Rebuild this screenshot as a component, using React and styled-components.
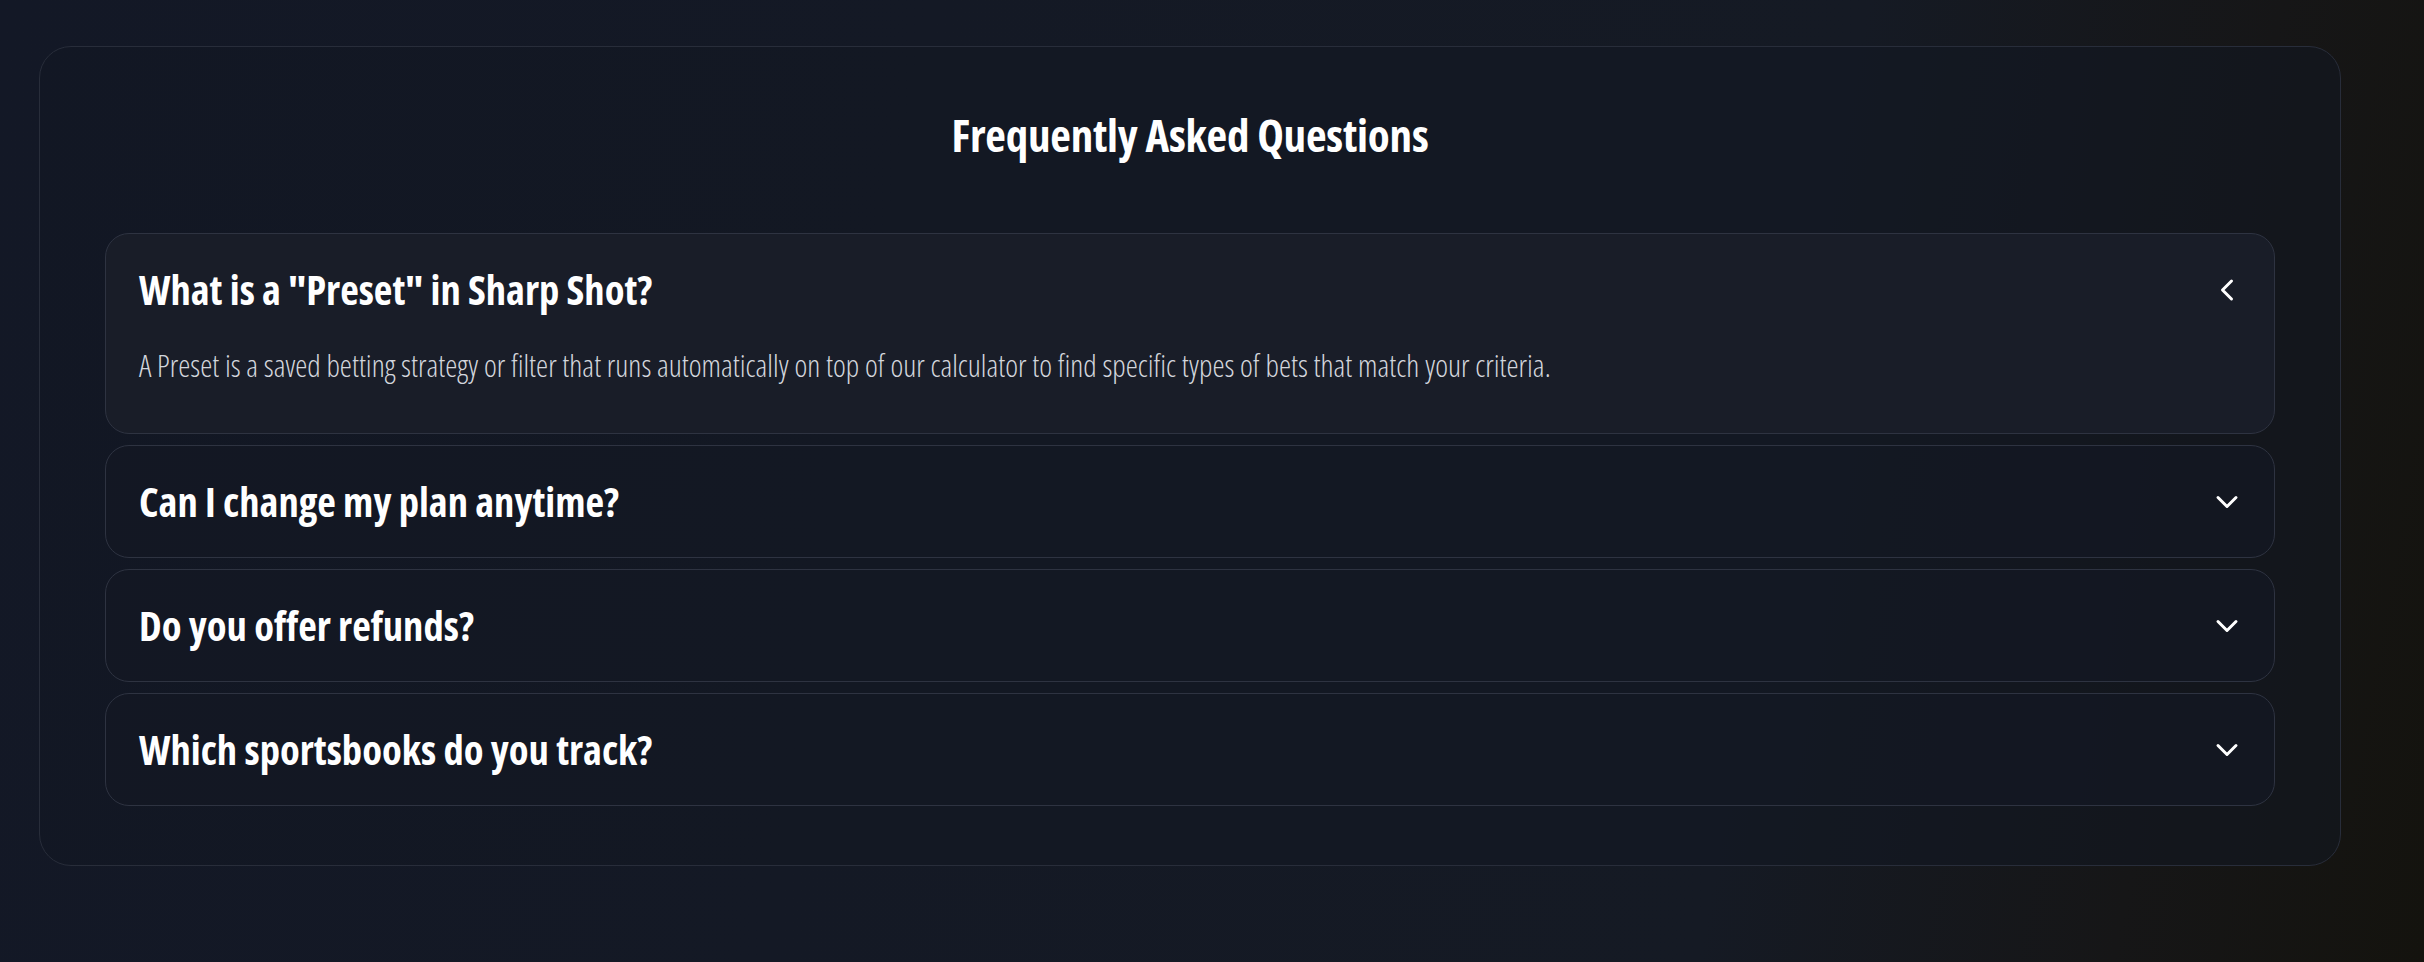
import React from "react";
import styled, { createGlobalStyle } from "styled-components";
import { ChevronDown } from "lucide-react";

const faqs = [
  {
    q: 'What is a "Preset" in Sharp Shot?',
    a: "A Preset is a saved betting strategy or filter that runs automatically on top of our calculator to find specific types of bets that match your criteria.",
    open: true,
  },
  { q: "Can I change my plan anytime?" },
  { q: "Do you offer refunds?" },
  { q: "Which sportsbooks do you track?" },
];

const GlobalStyle = createGlobalStyle`
  * { box-sizing: border-box; }
  body {
    margin: 0;
    font-family: "Open Sans", "Noto Sans", sans-serif;
    font-stretch: 75%;
    color: #ffffff;
  }
`;

const Page = styled.main`
  min-height: 100vh;
  padding: 46px 0 98px 39px;
  background: linear-gradient(100deg, #131826 0%, #151a24 72%, #161617 88%, #14130e 100%);
`;

const Card = styled.section`
  width: 2302px;
  padding: 60px 65px 59px;
  border: 1px solid #282d3a;
  border-radius: 32px;
  background: rgba(18, 23, 35, 0.55);
`;

const Title = styled.h2`
  margin: 0 0 70px;
  text-align: center;
  font-size: 45px;
  line-height: 56px;
  font-weight: 700;
  letter-spacing: -0.2px;
`;

const List = styled.div`
  display: flex;
  flex-direction: column;
  gap: 11px;
`;

const Item = styled.div`
  border: 1px solid #2e3341;
  border-radius: 24px;
  background: ${({ open }) => (open ? "#191d28" : "rgba(20, 24, 35, 0.7)")};
`;

const Header = styled.button`
  all: unset;
  box-sizing: border-box;
  width: 100%;
  height: 111px;
  padding: 0 29px 0 33px;
  display: flex;
  align-items: center;
  justify-content: space-between;
  cursor: pointer;
`;

const Question = styled.h3`
  margin: 0;
  font-size: 40.6px;
  line-height: 56px;
  font-weight: 700;
  font-stretch: 75%;
  color: #ffffff;
`;

const Arrow = styled(ChevronDown)`
  flex: none;
  color: #ffffff;
  transform: rotate(${({ $open }) => ($open ? 90 : 0)}deg);
`;

const Answer = styled.p`
  margin: 0;
  padding: 0 32px 48px 33px;
  font-size: 30.6px;
  line-height: 40px;
  font-weight: 300;
  color: #d3d6dd;
`;

export default function App() {
  return (
    <>
      <GlobalStyle />
      <Page>
        <Card>
          <Title>Frequently Asked Questions</Title>
          <List>
            {faqs.map((f) => (
              <Item key={f.q} open={f.open}>
                <Header>
                  <Question>{f.q}</Question>
                  <Arrow size={36} strokeWidth={2} $open={f.open} />
                </Header>
                {f.open && <Answer>{f.a}</Answer>}
              </Item>
            ))}
          </List>
        </Card>
      </Page>
    </>
  );
}
